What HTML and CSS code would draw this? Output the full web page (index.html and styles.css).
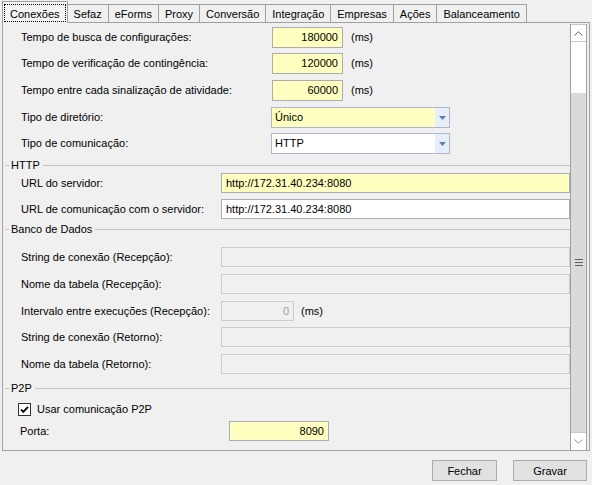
FILE: index.html
```html
<!DOCTYPE html>
<html lang="pt">
<head>
<meta charset="utf-8">
<title>Configurações</title>
<link rel="stylesheet" href="styles.css">
</head>
<body>
<div class="tabs">
  <div class="tab active"><div class="focus">Conexões</div></div>
  <div class="tab">Sefaz</div>
  <div class="tab">eForms</div>
  <div class="tab">Proxy</div>
  <div class="tab">Conversão</div>
  <div class="tab">Integração</div>
  <div class="tab">Empresas</div>
  <div class="tab">Ações</div>
  <div class="tab">Balanceamento</div>
</div>
<div class="panel">
  <div class="content">
    <div class="row top mt4">
      <span class="lbl lw-top">Tempo de busca de configurações:</span>
      <div class="edit yellow num w-num">180000</div>
      <span class="unit">(ms)</span>
    </div>
    <div class="row top mt5">
      <span class="lbl lw-top">Tempo de verificação de contingência:</span>
      <div class="edit yellow num w-num">120000</div>
      <span class="unit">(ms)</span>
    </div>
    <div class="row top mt6">
      <span class="lbl lw-top">Tempo entre cada sinalização de atividade:</span>
      <div class="edit yellow num w-num">60000</div>
      <span class="unit">(ms)</span>
    </div>
    <div class="row top mt6">
      <span class="lbl lw-top">Tipo de diretório:</span>
      <div class="combo">
        <div class="ctext yellow">Único</div>
        <div class="cbtn"><svg width="7" height="4" viewBox="0 0 7 4"><path d="M0 0h7L3.5 4z" fill="#5d7fae"/></svg></div>
      </div>
    </div>
    <div class="row top mt5">
      <span class="lbl lw-top">Tipo de comunicação:</span>
      <div class="combo">
        <div class="ctext">HTTP</div>
        <div class="cbtn"><svg width="7" height="4" viewBox="0 0 7 4"><path d="M0 0h7L3.5 4z" fill="#5d7fae"/></svg></div>
      </div>
    </div>

    <div class="group mt5"><span class="gdash"></span><span class="gtitle">HTTP</span><span class="gline"></span></div>
    <div class="row sub mt1">
      <span class="lbl lw-sub">URL do servidor:</span>
      <div class="edit yellow grow">http://172.31.40.234:8080</div>
    </div>
    <div class="row sub mt6">
      <span class="lbl lw-sub">URL de comunicação com o servidor:</span>
      <div class="edit grow">http://172.31.40.234:8080</div>
    </div>

    <div class="group mt4"><span class="gdash"></span><span class="gtitle">Banco de Dados</span><span class="gline"></span></div>
    <div class="row sub mt11">
      <span class="lbl lw-sub">String de conexão (Recepção):</span>
      <div class="edit disabled grow"></div>
    </div>
    <div class="row sub mt7">
      <span class="lbl lw-sub">Nome da tabela (Recepção):</span>
      <div class="edit disabled grow"></div>
    </div>
    <div class="row sub mt7">
      <span class="lbl lw-sub">Intervalo entre execuções (Recepção):</span>
      <div class="edit disabled num w-int">0</div>
      <span class="unit unit-int">(ms)</span>
    </div>
    <div class="row sub mt6">
      <span class="lbl lw-sub">String de conexão (Retorno):</span>
      <div class="edit disabled grow"></div>
    </div>
    <div class="row sub mt7">
      <span class="lbl lw-sub">Nome da tabela (Retorno):</span>
      <div class="edit disabled grow"></div>
    </div>

    <div class="group mt8"><span class="gdash"></span><span class="gtitle">P2P</span><span class="gline"></span></div>
    <div class="row check mt7">
      <span class="cbox"><svg width="11" height="11" viewBox="0 0 11 11"><path d="M2 5.5l2.3 2.4L9 2.8" fill="none" stroke="#000" stroke-width="1.8"/></svg></span>
      <span class="lbl">Usar comunicação P2P</span>
    </div>
    <div class="row porta mt4">
      <span class="lbl lw-porta">Porta:</span>
      <div class="edit yellow num w-porta">8090</div>
    </div>
  </div>
  <div class="vscroll">
    <div class="sbtn up"><svg width="9" height="5" viewBox="0 0 9 5"><path d="M0.5 4.5L4.5 0.8L8.5 4.5" fill="none" stroke="#606060" stroke-width="1"/></svg></div>
    <div class="strack"></div>
    <div class="sthumb"><svg width="8" height="7" viewBox="0 0 8 7"><path d="M0 0.5h8M0 3.5h8M0 6.5h8" stroke="#606060" stroke-width="1"/></svg></div>
    <div class="sbtn down"><svg width="9" height="5" viewBox="0 0 9 5"><path d="M0.5 0.5L4.5 4.2L8.5 0.5" fill="none" stroke="#909090" stroke-width="1"/></svg></div>
  </div>
</div>
<div class="footer">
  <button class="btn btn-fechar" type="button">Fechar</button>
  <button class="btn btn-gravar" type="button">Gravar</button>
</div>
</body>
</html>
```

FILE: styles.css
```css
* { box-sizing: border-box; }
html, body { margin: 0; padding: 0; }
body {
  width: 592px;
  height: 485px;
  overflow: hidden;
  background: #f0f0f0;
  font-family: "Liberation Sans", Arial, sans-serif;
  font-size: 11px;
  line-height: 13px;
  color: #000;
}

/* tabs */
.tabs {
  display: flex;
  align-items: flex-end;
  height: 22px;
  padding-left: 2px;
}
.tab {
  flex-shrink: 0;
  height: 18px;
  padding: 3px 6px 0;
  border: 1px solid #a0a0a0;
  border-left: none;
  border-bottom: none;
  background: #f0f0f0;
  white-space: nowrap;
}
.tab.active {
  height: 22px;
  margin-bottom: -1px;
  padding: 0;
  border-left: 1px solid #a0a0a0;
  position: relative;
  z-index: 1;
  background: #f4f4f4;
}
.focus {
  margin: 2px 1px 0;
  height: 18px;
  padding: 3px 5px 0;
  border: 1px dotted #000;
  text-align: center;
}

/* panel */
.panel {
  margin: 0 2px;
  height: 429px;
  border: 1px solid #a0a0a0;
  display: flex;
  background: #f0f0f0;
}
.content {
  flex: 1;
  min-width: 0;
  display: flex;
  flex-direction: column;
}

.row {
  display: flex;
  align-items: center;
  height: 20px;
  flex-shrink: 0;
}
.row.top { height: 21px; padding-left: 18px; }
.row.sub { padding-left: 18px; }
.row.check { height: 15px; padding-left: 15px; }
.row.porta { padding-left: 17px; }

.mt1 { margin-top: 1px; }
.mt4 { margin-top: 4px; }
.mt5 { margin-top: 5px; }
.mt6 { margin-top: 6px; }
.mt7 { margin-top: 7px; }
.mt8 { margin-top: 8px; }
.mt11 { margin-top: 11px; }

.lbl { white-space: nowrap; flex-shrink: 0; }
.lw-top { width: 251px; }
.lw-sub { width: 200px; }
.lw-porta { width: 209px; }

.edit {
  height: 100%;
  border: 1px solid #abadb3;
  background: #fff;
  padding: 0 4px;
  line-height: 18px;
  white-space: nowrap;
  overflow: hidden;
  flex-shrink: 0;
}
.edit.yellow, .ctext.yellow { background: #ffffc0; }
.edit.num { text-align: right; }
.edit.grow { flex: 1; min-width: 0; }
.edit.disabled { background: #f0f0f0; border-color: #cccccc; color: #a0a0a0; }
.w-num { width: 71px; }
.w-int { width: 73px; }
.w-porta { width: 100px; }

.unit { margin-left: 8px; }
.unit-int { margin-left: 7px; }

.combo {
  display: flex;
  width: 179px;
  height: 21px;
  margin-left: -1px;
  border: 1px solid #abb9cc;
}
.ctext {
  flex: 1;
  padding-left: 3px;
  line-height: 19px;
  background: #fff;
}
.cbtn {
  width: 14px;
  display: flex;
  align-items: center;
  justify-content: center;
  background: #e7eef7;
}

/* group headers */
.group {
  display: flex;
  align-items: center;
  height: 13px;
  flex-shrink: 0;
}
.gdash {
  width: 4px;
  height: 1px;
  margin-left: 2px;
  background: #c4c4c4;
}
.gtitle { padding: 0 3px 0 2px; white-space: nowrap; }
.gline { flex: 1; height: 1px; background: #c4c4c4; }

/* checkbox */
.cbox {
  width: 13px;
  height: 13px;
  border: 1px solid #333;
  background: #fff;
  display: flex;
  align-items: center;
  justify-content: center;
  margin-right: 6px;
}

/* scrollbar */
.vscroll {
  width: 17px;
  margin: 1px 2px 0 0;
  border-left: 1px solid #a0a0a0;
  border-right: 1px solid #a0a0a0;
  display: flex;
  flex-direction: column;
  background: #fff;
}
.sbtn {
  height: 18px;
  display: flex;
  align-items: center;
  justify-content: center;
  background: #fff;
  flex-shrink: 0;
}
.sbtn.up { border-top: 1px solid #c8c8c8; border-bottom: 1px solid #c8c8c8; }
.sbtn.down { border-top: 1px solid #c8c8c8; }
.strack { height: 51px; flex-shrink: 0; }
.sthumb {
  flex: 1;
  background: #dadada;
  display: flex;
  align-items: center;
  justify-content: center;
}

/* footer */
.footer {
  display: flex;
  justify-content: flex-end;
  gap: 16px;
  padding: 9px 5px 0 0;
}
.btn {
  height: 21px;
  border: 1px solid #adadad;
  background: #e1e1e1;
  font-family: inherit;
  font-size: 11px;
  color: #000;
  padding: 0;
}
.btn-fechar { width: 65px; }
.btn-gravar { width: 74px; }
```
